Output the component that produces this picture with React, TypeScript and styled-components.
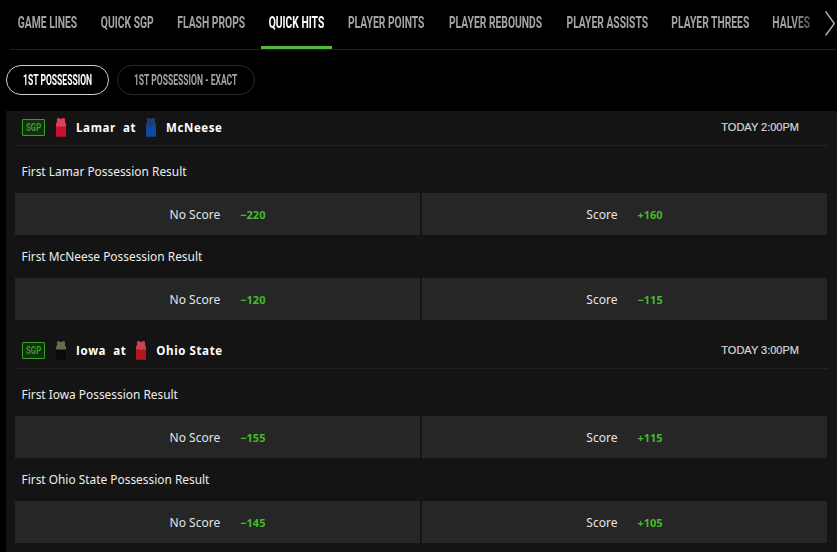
import React from "react";
import styled, { createGlobalStyle } from "styled-components";

const Global = createGlobalStyle`
  html, body { margin: 0; padding: 0; background: #000; overflow: hidden; }
  body { width: 837px; height: 552px; font-family: "Noto Sans", sans-serif; }
`;

const Page = styled.div`
  width: 837px;
  height: 552px;
  overflow: hidden;
  display: flex;
  flex-direction: column;
`;

const TabBar = styled.nav`
  position: relative;
  height: 49px;
  margin-left: 10px;
  border-bottom: 1px solid #1f1f1f;
  flex: none;
`;

const TabRow = styled.div`
  display: flex;
  gap: 7.5px;
  margin-left: -1.5px;
`;

const Tab = styled.div<{ $w: number; $active?: boolean }>`
  width: ${(p) => p.$w}px;
  height: 49px;
  flex: none;
  display: flex;
  justify-content: center;
  align-items: center;
  box-sizing: border-box;
  padding-bottom: 1px;
  border-bottom: 3px solid ${(p) => (p.$active ? "#53b93a" : "transparent")};
  color: ${(p) => (p.$active ? "#fff" : "#a3a3a3")};
`;

const Condensed = styled.span`
  flex: none;
  white-space: nowrap;
  font-family: Roboto, sans-serif;
  font-weight: 700;
  font-size: 16.5px;
  transform: scaleX(0.625);
`;

const FadeText = styled(Condensed)`
  background: linear-gradient(90deg, #a3a3a3 55%, #555 100%);
  -webkit-background-clip: text;
  background-clip: text;
  color: transparent;
`;

const Arrow = styled.svg`
  position: absolute;
  right: 2px;
  top: 11px;
  width: 10px;
  height: 25px;
`;

const Pills = styled.div`
  display: flex;
  gap: 8px;
  padding: 15px 0 16px 6px;
  flex: none;
`;

const Pill = styled.div<{ $w: number; $active?: boolean }>`
  width: ${(p) => p.$w}px;
  height: 30px;
  box-sizing: border-box;
  border-radius: 15px;
  border: ${(p) => (p.$active ? "1.5px solid #cfcfcf" : "1px solid #2a2a2a")};
  display: flex;
  justify-content: center;
  align-items: center;
  color: ${(p) => (p.$active ? "#fff" : "#a3a3a3")};
`;

const PillText = styled(Condensed)`
  font-size: 14.5px;
  transform: scaleX(0.59);
`;

const Panel = styled.section`
  margin-left: 6px;
  width: 831px;
  flex: 1;
  background: #141414;
`;

const GameBlock = styled.article`
  & + & {
    padding-top: 14px;
  }
`;

const GameHead = styled.header`
  height: 32px;
  margin: 0 9px 4px 8px;
  padding: 0 29px 2px 8px;
  display: flex;
  align-items: center;
  border-bottom: 1px solid #222;
`;

const SgpBadge = styled.span`
  width: 23px;
  height: 17px;
  box-sizing: border-box;
  border: 1.5px solid #3a9e28;
  background: #113010;
  border-radius: 1px;
  color: #3a9e28;
  display: flex;
  justify-content: center;
  align-items: center;
  margin-right: 11px;
`;

const BadgeText = styled(Condensed)`
  font-size: 11px;
  transform: scaleX(0.72);
`;

const Jersey = styled.svg`
  width: 10px;
  height: 19px;
  flex: none;
`;

const TeamLine = styled.span`
  font-family: "Open Sans", sans-serif;
  font-weight: 700;
  font-size: 11.5px;
  letter-spacing: 0.6px;
  color: #fff;
  white-space: pre;
  margin: 0 7px 0 10px;
`;

const HomeTeam = styled(TeamLine)`
  margin: 0 0 0 10px;
`;

const AtWord = styled(TeamLine)`
  margin: 0 10px 0 0;
`;

const StartTime = styled.time`
  margin-left: auto;
  font-family: "Liberation Sans", sans-serif;
  font-size: 11px;
  color: #d6d6d6;
  -webkit-text-stroke: 0.2px #d6d6d6;
`;

const MarketTitle = styled.div`
  height: 43px;
  box-sizing: border-box;
  padding: 0 0 2px 15.5px;
  display: flex;
  align-items: center;
  font-size: 11.9px;
  color: #eeeeee;
`;

const Outcomes = styled.div`
  display: grid;
  grid-template-columns: 405px 405px;
  gap: 2px;
  margin: 0 9px;
`;

const Outcome = styled.div`
  height: 42px;
  background: #262626;
  display: flex;
  justify-content: center;
  align-items: center;
  gap: 20px;
`;

const OutcomeName = styled.span`
  font-size: 12px;
  color: #e4e4e4;
`;

const Price = styled.span`
  font-size: 11px;
  font-weight: 700;
  color: #44bb2e;
`;

function JerseyIcon({ body, top }: { body: string; top: string }) {
  return (
    <Jersey viewBox="0 0 10 19">
      <path d="M1 1.2 Q1 0.3 2 0.3 H3.2 Q5 1.6 6.8 0.3 H8 Q9 0.3 9 1.2 V4 Q9 5 10 5.6 V18.8 H0 V5.6 Q1 5 1 4 Z" fill={body} />
      <path d="M1 1.2 Q1 0.3 2 0.3 H3.2 Q5 1.6 6.8 0.3 H8 Q9 0.3 9 1.2 V4 Q9 5 10 5.6 V8.5 H0 V5.6 Q1 5 1 4 Z" fill={top} />
    </Jersey>
  );
}

type Team = { name: string; body: string; top: string };
type Market = { title: string; noScore: string; score: string };
type Game = { away: Team; home: Team; time: string; markets: Market[] };

const games: Game[] = [
  {
    away: { name: "Lamar", body: "#c8102e", top: "#d9405a" },
    home: { name: "McNeese", body: "#0f4aa0", top: "#1d3f70" },
    time: "TODAY 2:00PM",
    markets: [
      { title: "First Lamar Possession Result", noScore: "−220", score: "+160" },
      { title: "First McNeese Possession Result", noScore: "−120", score: "−115" },
    ],
  },
  {
    away: { name: "Iowa", body: "#0a0a0a", top: "#6f6850" },
    home: { name: "Ohio State", body: "#b3161c", top: "#c9454b" },
    time: "TODAY 3:00PM",
    markets: [
      { title: "First Iowa Possession Result", noScore: "−155", score: "+115" },
      { title: "First Ohio State Possession Result", noScore: "−145", score: "+105" },
    ],
  },
];

const tabs: [string, number][] = [
  ["GAME LINES", 77],
  ["QUICK SGP", 69],
  ["FLASH PROPS", 84],
  ["QUICK HITS", 71],
  ["PLAYER POINTS", 93],
  ["PLAYER REBOUNDS", 111],
  ["PLAYER ASSISTS", 97],
  ["PLAYER THREES", 94],
];

export default function App() {
  return (
    <Page>
      <Global />
      <TabBar>
        <TabRow>
          {tabs.map(([label, w]) => (
            <Tab key={label} $w={w} $active={label === "QUICK HITS"}>
              <Condensed>{label}</Condensed>
            </Tab>
          ))}
          <Tab $w={54}>
            <FadeText>HALVES</FadeText>
          </Tab>
        </TabRow>
        <Arrow viewBox="0 0 10 25">
          <path d="M0.6 0.5 L9.3 12.5 L0.6 24.5" fill="none" stroke="#b5b5b5" strokeWidth="1.3" />
        </Arrow>
      </TabBar>
      <Pills>
        <Pill $w={103} $active>
          <PillText>1ST POSSESSION</PillText>
        </Pill>
        <Pill $w={138}>
          <PillText>1ST POSSESSION - EXACT</PillText>
        </Pill>
      </Pills>
      <Panel>
        {games.map((g) => (
          <GameBlock key={g.time}>
            <GameHead>
              <SgpBadge>
                <BadgeText>SGP</BadgeText>
              </SgpBadge>
              <JerseyIcon body={g.away.body} top={g.away.top} />
              <TeamLine>{g.away.name}</TeamLine>
              <AtWord>at</AtWord>
              <JerseyIcon body={g.home.body} top={g.home.top} />
              <HomeTeam>{g.home.name}</HomeTeam>
              <StartTime>{g.time}</StartTime>
            </GameHead>
            {g.markets.map((m) => (
              <React.Fragment key={m.title}>
                <MarketTitle>{m.title}</MarketTitle>
                <Outcomes>
                  <Outcome>
                    <OutcomeName>No Score</OutcomeName>
                    <Price>{m.noScore}</Price>
                  </Outcome>
                  <Outcome>
                    <OutcomeName>Score</OutcomeName>
                    <Price>{m.score}</Price>
                  </Outcome>
                </Outcomes>
              </React.Fragment>
            ))}
          </GameBlock>
        ))}
      </Panel>
    </Page>
  );
}
